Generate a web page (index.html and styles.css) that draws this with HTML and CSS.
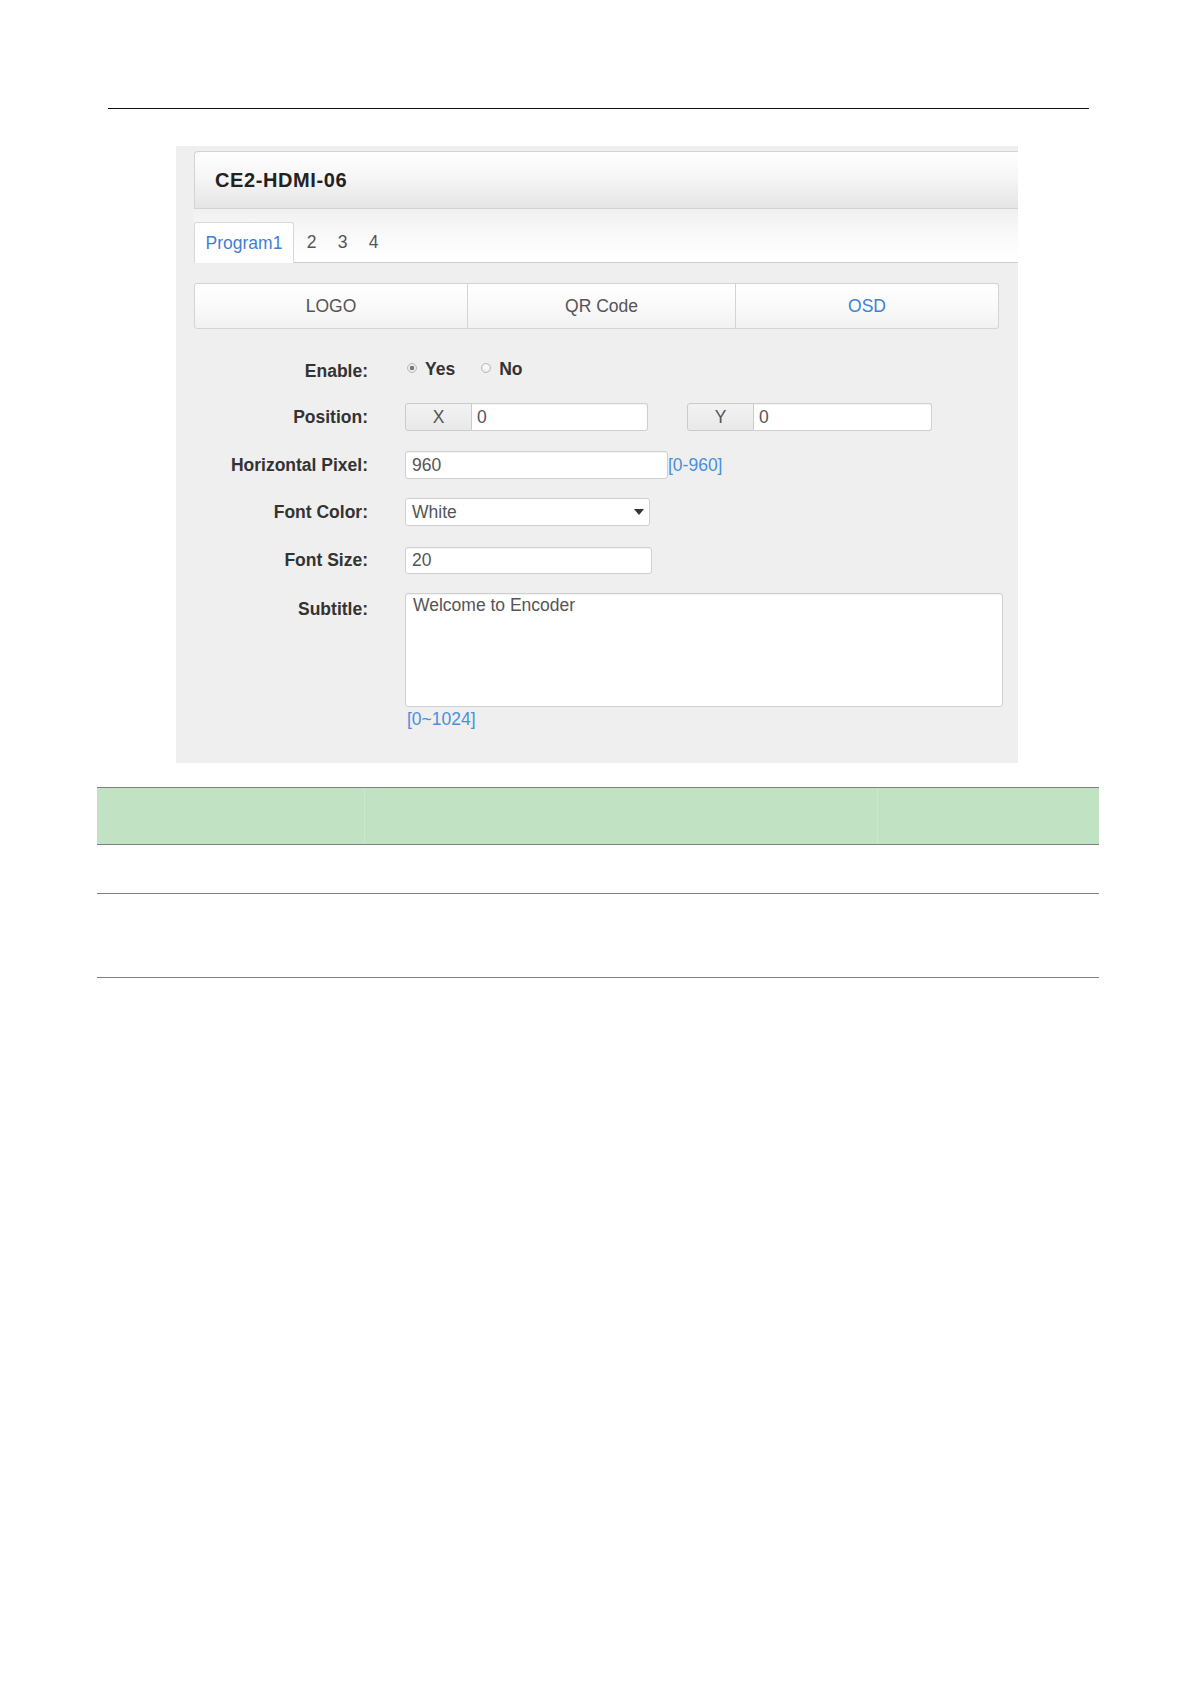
FILE: index.html
```html
<!DOCTYPE html>
<html>
<head>
<meta charset="utf-8">
<title>CE2-HDMI-06 OSD</title>
<link rel="stylesheet" href="styles.css">
</head>
<body>
<div class="page">
  <div class="rule"></div>

  <div class="panel">
    <div class="header">CE2-HDMI-06</div>

    <div class="tabbar">
      <div class="tab active">Program1</div>
      <div class="tab num first">2</div>
      <div class="tab num">3</div>
      <div class="tab num">4</div>
    </div>

    <div class="seg">
      <div class="seg-btn">LOGO</div>
      <div class="seg-btn">QR Code</div>
      <div class="seg-btn active">OSD</div>
    </div>

    <div class="form">
      <div class="row r-enable">
        <div class="label">Enable:</div>
        <div class="ctrl">
          <span class="radio"><span class="dot checked"></span><span class="rtext">Yes</span></span>
          <span class="radio no"><span class="dot"></span><span class="rtext">No</span></span>
        </div>
      </div>

      <div class="row r-pos">
        <div class="label">Position:</div>
        <div class="ctrl">
          <div class="group">
            <span class="addon">X</span>
            <input class="input in-x" type="text" value="0">
          </div>
          <div class="group gy">
            <span class="addon">Y</span>
            <input class="input in-y" type="text" value="0">
          </div>
        </div>
      </div>

      <div class="row r-hp">
        <div class="label">Horizontal Pixel:</div>
        <div class="ctrl">
          <input class="input solo in-hp" type="text" value="960"><span class="hint">[0-960]</span>
        </div>
      </div>

      <div class="row r-fc">
        <div class="label">Font Color:</div>
        <div class="ctrl">
          <div class="select">
            <span class="sel-text">White</span>
            <span class="caret"></span>
          </div>
        </div>
      </div>

      <div class="row r-fs">
        <div class="label">Font Size:</div>
        <div class="ctrl">
          <input class="input solo in-fs" type="text" value="20">
        </div>
      </div>

      <div class="row r-sub">
        <div class="label">Subtitle:</div>
        <div class="ctrl col">
          <textarea class="textarea">Welcome to Encoder</textarea>
          <span class="hint below">[0~1024]</span>
        </div>
      </div>
    </div>
  </div>

  <table class="grid">
    <tr class="head">
      <td class="c1"></td>
      <td class="c2"></td>
      <td class="c3"></td>
    </tr>
    <tr class="r2">
      <td></td><td></td><td></td>
    </tr>
    <tr class="r3">
      <td></td><td></td><td></td>
    </tr>
  </table>
</div>
</body>
</html>
```

FILE: styles.css
```css
html, body {
  margin: 0;
  padding: 0;
  background: #ffffff;
}

body {
  width: 1191px;
  font-family: "Liberation Sans", Arial, sans-serif;
  color: #333;
}

.page {
  padding-top: 108px;
}

.rule {
  margin-left: 108px;
  width: 981px;
  height: 0;
  border-top: 1.5px solid #111;
}

.panel {
  margin: 37px 0 0 176px;
  width: 842px;
  height: 617px;
  box-sizing: border-box;
  background: #efefef;
  padding: 5px 0 0 18px;
}

.header {
  height: 58px;
  box-sizing: border-box;
  border: 1px solid #d3d3d3;
  border-right: 0;
  border-radius: 4px 0 0 0;
  background: linear-gradient(#fefefe, #f6f6f6 45%, #e5e5e5);
  display: flex;
  align-items: center;
  padding-left: 20px;
  font-size: 20px;
  font-weight: bold;
  letter-spacing: 0.6px;
  color: #222;
}

.tabbar {
  height: 54px;
  box-sizing: border-box;
  border-bottom: 1px solid #cdcdcd;
  background: linear-gradient(#f0f0f0, #fbfbfb 60%, #ffffff);
  display: flex;
  align-items: flex-end;
}

.tab {
  height: 40px;
  display: flex;
  align-items: center;
  justify-content: center;
  font-size: 17.5px;
  color: #555;
  box-sizing: border-box;
}

.tab.active {
  width: 100px;
  background: #ffffff;
  border: 1px solid #d8d8d8;
  border-bottom: 0;
  border-radius: 3px 3px 0 0;
  margin-bottom: -1px;
  height: 41px;
  color: #3f7fd6;
}

.tab.num {
  width: 31px;
}

.tab.num.first {
  margin-left: 2px;
}

.seg {
  margin-top: 20px;
  display: grid;
  grid-template-columns: 274px 268px 263px;
  height: 46px;
}

.seg-btn {
  display: flex;
  align-items: center;
  justify-content: center;
  box-sizing: border-box;
  border: 1px solid #d4d4d4;
  border-left: 0;
  background: linear-gradient(#ffffff, #fafafa 50%, #f1f1f1);
  font-size: 17.5px;
  color: #555;
}

.seg-btn:first-child {
  border-left: 1px solid #d4d4d4;
  border-radius: 3px 0 0 3px;
}

.seg-btn:last-child {
  border-radius: 0 3px 3px 0;
}

.seg-btn.active {
  color: #3f7fd6;
}

.form {
  margin-top: 28px;
}

.row {
  display: grid;
  grid-template-columns: 174px auto;
  column-gap: 37px;
  align-items: center;
  height: 28px;
}

.r-pos { margin-top: 18px; }
.r-hp { margin-top: 20px; }
.r-fc { margin-top: 19px; }
.r-fs { margin-top: 20px; }
.r-sub {
  margin-top: 19px;
  height: auto;
  align-items: start;
}

.label {
  text-align: right;
  font-size: 17.5px;
  font-weight: bold;
  color: #333;
  line-height: 20px;
}

.r-sub .label {
  padding-top: 6px;
}

.ctrl {
  display: flex;
  align-items: center;
}

.ctrl.col {
  flex-direction: column;
  align-items: flex-start;
}

.radio {
  display: inline-flex;
  align-items: center;
  margin-top: -3px;
}

.radio.no {
  margin-left: 24px;
}

.dot {
  width: 10px;
  height: 10px;
  box-sizing: border-box;
  border-radius: 50%;
  border: 1px solid #b8b8b8;
  background: radial-gradient(circle at 50% 40%, #ffffff, #e4e4e4);
  margin-left: 2px;
  margin-top: -4px;
}

.dot.checked {
  background: radial-gradient(circle, #777 0, #777 2px, #e8e8e8 2.5px, #f4f4f4);
}

.rtext {
  margin-left: 8px;
  font-size: 17.5px;
  font-weight: bold;
  color: #333;
}

.group {
  display: flex;
  height: 28px;
}

.group.gy {
  margin-left: 39px;
}

.addon {
  width: 67px;
  box-sizing: border-box;
  border: 1px solid #cbcbcb;
  border-radius: 3px 0 0 3px;
  background: linear-gradient(#f2f2f2, #e9e9e9);
  display: flex;
  align-items: center;
  justify-content: center;
  font-size: 17.5px;
  color: #555;
}

.input {
  height: 28px;
  box-sizing: border-box;
  border: 1px solid #cfcfcf;
  background: #ffffff;
  font-family: "Liberation Sans", Arial, sans-serif;
  font-size: 17.5px;
  color: #555;
  padding: 0 0 0 5px;
  margin: 0;
  outline: none;
  box-shadow: inset 0 1px 1px rgba(0,0,0,0.05);
}

.group .input {
  border-left: 0;
  border-radius: 0 3px 3px 0;
}

.in-x { width: 176px; }
.in-y { width: 178px; }

.input.solo {
  border-radius: 3px;
  padding-left: 6px;
}

.in-hp { width: 263px; }
.in-fs { width: 247px; height: 27px; }

.hint {
  font-size: 17.5px;
  color: #4a8ee0;
}

.hint.below {
  margin-top: 2px;
  margin-left: 2px;
  line-height: 20px;
}

.select {
  width: 245px;
  height: 28px;
  box-sizing: border-box;
  border: 1px solid #cfcfcf;
  border-radius: 3px;
  background: #ffffff;
  display: flex;
  align-items: center;
  padding: 0 0 0 6px;
  font-size: 17.5px;
  color: #555;
}

.caret {
  margin-left: auto;
  margin-right: 5px;
  width: 0;
  height: 0;
  border-left: 5px solid transparent;
  border-right: 5px solid transparent;
  border-top: 6px solid #333;
}

.textarea {
  width: 598px;
  height: 114px;
  box-sizing: border-box;
  border: 1px solid #cfcfcf;
  border-radius: 3px;
  background: #ffffff;
  font-family: "Liberation Sans", Arial, sans-serif;
  font-size: 17.5px;
  line-height: 20px;
  color: #555;
  padding: 1px 7px;
  margin: 0;
  resize: none;
  outline: none;
  box-shadow: inset 0 1px 1px rgba(0,0,0,0.05);
}

.grid {
  margin: 24px 0 0 97px;
  width: 1002px;
  border-collapse: collapse;
}

.grid td {
  padding: 0;
  border-bottom: 1px solid #808080;
}

.grid .head td {
  height: 56px;
  background: #c1e3c4;
  border-top: 1px solid #808080;
}

.grid .head td + td {
  border-left: 1px solid #cbe9ce;
}

.grid .c1 { width: 268px; }
.grid .c2 { width: 513px; }
.grid .c3 { width: 221px; }

.grid .r2 td { height: 48px; }
.grid .r3 td { height: 83px; }
```
